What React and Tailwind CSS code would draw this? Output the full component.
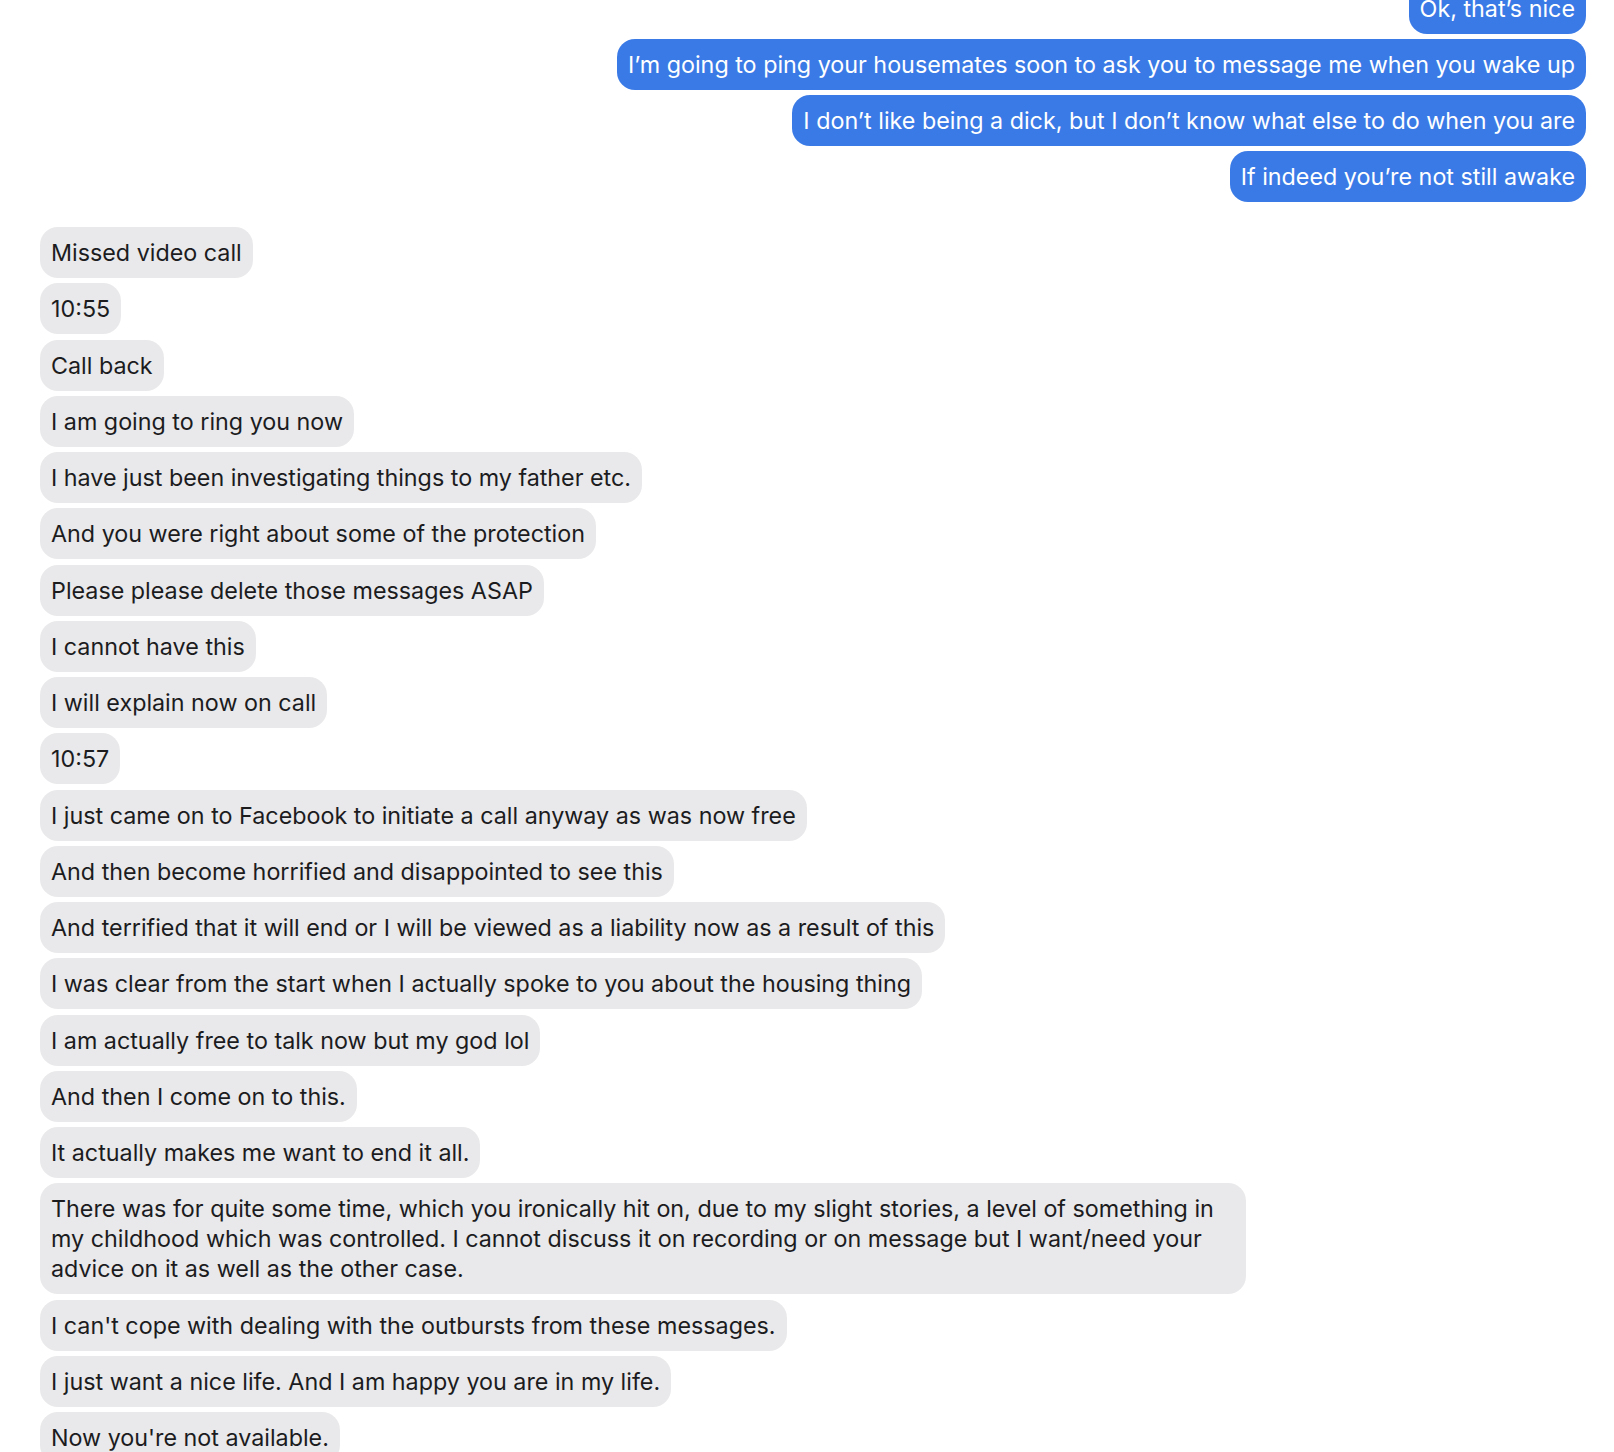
const outgoing = [
  "Ok, that’s nice",
  "I’m going to ping your housemates soon to ask you to message me when you wake up",
  "I don’t like being a dick, but I don’t know what else to do when you are",
  "If indeed you’re not still awake",
];

const incoming = [
  "Missed video call",
  "10:55",
  "Call back",
  "I am going to ring you now",
  "I have just been investigating things to my father etc.",
  "And you were right about some of the protection",
  "Please please delete those messages ASAP",
  "I cannot have this",
  "I will explain now on call",
  "10:57",
  "I just came on to Facebook to initiate a call anyway as was now free",
  "And then become horrified and disappointed to see this",
  "And terrified that it will end or I will be viewed as a liability now as a result of this",
  "I was clear from the start when I actually spoke to you about the housing thing",
  "I am actually free to talk now but my god lol",
  "And then I come on to this.",
  "It actually makes me want to end it all.",
  "There was for quite some time, which you ironically hit on, due to my slight stories, a level of something in my childhood which was controlled. I cannot discuss it on recording or on message but I want/need your advice on it as well as the other case.",
  "I can't cope with dealing with the outbursts from these messages.",
  "I just want a nice life. And I am happy you are in my life.",
  "Now you're not available.",
];

const Bubble = ({ text, mine }) => (
  <div
    className={
      mine
        ? "self-end max-w-[1000px] rounded-[18px] bg-[#3a7ae6] px-[11px] py-[10.5px] text-white"
        : "self-start max-w-[1206px] rounded-[18px] bg-[#e9e9eb] px-[11px] pt-[11px] pb-[10px] text-[#1c1c1e]"
    }
  >
    {text}
  </div>
);

export default function App() {
  return (
    <div
      className="min-h-[1452px] w-full overflow-hidden bg-white pl-10 pr-[28px] text-[23.3px] leading-[30px]"
      style={{ fontFamily: "Inter, 'Noto Sans', sans-serif" }}
    >
      <div className="-mt-[17px] flex flex-col gap-[5px]">
        {outgoing.map((t) => (
          <Bubble key={t} text={t} mine />
        ))}
      </div>
      <div className="mt-[25px] flex flex-col gap-[5.25px]">
        {incoming.map((t) => (
          <Bubble key={t} text={t} />
        ))}
      </div>
    </div>
  );
}
